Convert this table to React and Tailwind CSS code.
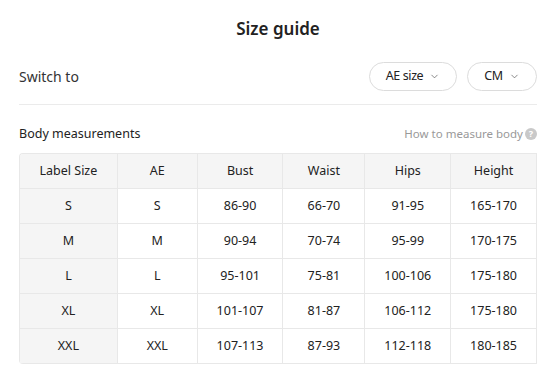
import { ChevronDown } from "lucide-react";

const COLS = [
  { key: "label", title: "Label Size", w: "w-[98px]" },
  { key: "ae", title: "AE", w: "w-[80px]" },
  { key: "bust", title: "Bust", w: "w-[86px]" },
  { key: "waist", title: "Waist", w: "w-[82px]" },
  { key: "hips", title: "Hips", w: "w-[86px]" },
  { key: "height", title: "Height", w: "w-[86px]" },
];

const ROWS = [
  ["S", "S", "86-90", "66-70", "91-95", "165-170"],
  ["M", "M", "90-94", "70-74", "95-99", "170-175"],
  ["L", "L", "95-101", "75-81", "100-106", "175-180"],
  ["XL", "XL", "101-107", "81-87", "106-112", "175-180"],
  ["XXL", "XXL", "107-113", "87-93", "112-118", "180-185"],
];

function Pill({ label, width }) {
  return (
    <button
      className={`${width} h-[29px] rounded-full border border-[#dcdcdc] bg-white flex items-center justify-center gap-[6px] text-[12.5px] text-[#222] tracking-[-0.4px]`}
    >
      <span>{label}</span>
      <ChevronDown size={11} strokeWidth={1.5} className="text-[#555]" />
    </button>
  );
}

export default function App() {
  return (
    <div
      className="w-[538px] h-[371px] overflow-hidden bg-white text-[#222]"
      style={{ fontFamily: '"Noto Sans", "Open Sans", sans-serif' }}
    >
      <div className="ml-[19px] w-[518px]">
        <h1 className="pt-[15px] h-[44px] text-center text-[17px] font-semibold leading-[28px] text-[#222]">
          Size guide
        </h1>

        {/* switch row */}
        <div className="flex items-center justify-between h-[30px] mt-[17px]">
          <span className="text-[14px] text-[#333]">Switch to</span>
          <div className="flex gap-[10px]">
            <Pill label="AE size" width="w-[88px]" />
            <Pill label="CM" width="w-[70px]" />
          </div>
        </div>

        <div className="mt-[13px] border-t border-[#ebebeb]" />

        <div className="flex items-center justify-between h-[24px] mt-[17px]">
          <span className="text-[12.5px] text-[#222]">Body measurements</span>
          <span className="flex items-center gap-[2px] text-[11.5px] text-[#999]">
            How to measure body
            <span className="w-[12px] h-[12px] rounded-full bg-[#c9c9c9] text-white text-[9px] font-bold leading-[12px] text-center">
              ?
            </span>
          </span>
        </div>

        {/* table */}
        <div className="mt-[7px] w-[518px] border-l border-t border-[#e8e8e8] rounded-tl-[4px] rounded-bl-[4px] overflow-hidden text-[12.5px] text-[#222]">
          <div className="flex h-[35px] bg-[#f5f5f5]">
            {COLS.map((c) => (
              <div
                key={c.key}
                className={`${c.w} flex items-center justify-center border-r border-b border-[#e8e8e8]`}
              >
                {c.title}
              </div>
            ))}
          </div>
          {ROWS.map((r, i) => (
            <div key={i} className="flex h-[35px]">
              {r.map((v, j) => (
                <div
                  key={j}
                  className={`${COLS[j].w} flex items-center justify-center border-r border-b border-[#e8e8e8] ${
                    j === 0 ? "bg-[#f5f5f5]" : "bg-white"
                  }`}
                >
                  {v}
                </div>
              ))}
            </div>
          ))}
        </div>
      </div>
    </div>
  );
}
